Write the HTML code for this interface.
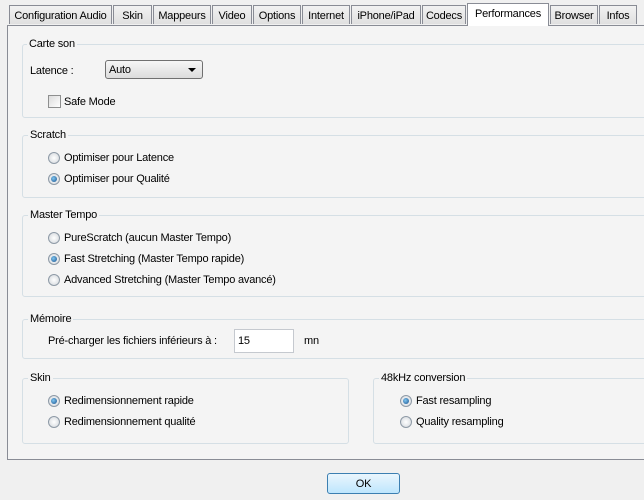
<!DOCTYPE html><html><head><style>
body{margin:0;width:644px;height:500px;background:#f0f0f0;font-family:"Liberation Sans",sans-serif;font-size:11px;letter-spacing:-0.2px;color:#000;position:relative;overflow:hidden}
.a{position:absolute;white-space:nowrap}
.tab{position:absolute;top:5px;height:19px;border:1px solid #898c95;border-bottom:none;background:linear-gradient(#f2f2f2,#e0e0e0);text-align:center;line-height:20px;box-sizing:border-box}
.panel{position:absolute;left:7px;top:25px;width:650px;height:435px;border:1px solid #898c95;background:#f4f4f4;box-sizing:border-box}
.g{position:absolute;border:1px solid #d5dfe5;border-radius:3px;box-sizing:border-box}
.gl{position:absolute;background:#f4f4f4;padding:0 2px;line-height:13px}
.r{position:absolute;width:12px;height:12px;border-radius:50%;border:1px solid #8e9aa6;background:radial-gradient(#fff,#d0d5da);box-sizing:border-box}
.r.on::after{content:"";position:absolute;left:2px;top:2px;width:6px;height:6px;border-radius:50%;background:radial-gradient(circle at 40% 40%,#7fc6f0,#174f8c)}
</style></head><body>
<div class="panel"></div>
<div class="tab" style="left:9px;width:103px">Configuration Audio</div>
<div class="tab" style="left:113px;width:39px">Skin</div>
<div class="tab" style="left:153px;width:58px">Mappeurs</div>
<div class="tab" style="left:212px;width:40px">Video</div>
<div class="tab" style="left:253px;width:48px">Options</div>
<div class="tab" style="left:302px;width:48px">Internet</div>
<div class="tab" style="left:351px;width:70px">iPhone/iPad</div>
<div class="tab" style="left:422px;width:44px">Codecs</div>
<div class="tab" style="left:467px;top:3px;height:23px;width:82px;background:#fff;line-height:20px">Performances</div>
<div class="tab" style="left:550px;width:48px">Browser</div>
<div class="tab" style="left:599px;width:38px">Infos</div>

<div class="g" style="left:22px;top:44px;width:640px;height:74px"></div>
<div class="gl" style="left:27px;top:38px">Carte son</div>
<div class="a" style="left:30px;top:65px">Latence :</div>
<div class="a" style="left:105px;top:60px;width:98px;height:19px;border:1px solid #707070;border-radius:3px;box-sizing:border-box;background:linear-gradient(#f6f6f6,#dcdcdc)"><span style="position:absolute;left:3px;top:3px">Auto</span><span style="position:absolute;right:6px;top:7px;border:4px solid transparent;border-top:4px solid #000;border-bottom:none;width:0"></span></div>
<div class="a" style="left:48px;top:95px;width:13px;height:13px;border:1px solid #8e8f8f;box-sizing:border-box;background:linear-gradient(135deg,#dcdcdc,#fff)"></div>
<div class="a" style="left:64px;top:96px">Safe Mode</div>

<div class="g" style="left:22px;top:135px;width:640px;height:63px"></div>
<div class="gl" style="left:28px;top:129px">Scratch</div>
<div class="r" style="left:48px;top:152px"></div><div class="a" style="left:64px;top:152px">Optimiser pour Latence</div>
<div class="r on" style="left:48px;top:173px"></div><div class="a" style="left:64px;top:173px">Optimiser pour Qualité</div>

<div class="g" style="left:22px;top:215px;width:640px;height:82px"></div>
<div class="gl" style="left:28px;top:209px">Master Tempo</div>
<div class="r" style="left:48px;top:232px"></div><div class="a" style="left:64px;top:232px">PureScratch (aucun Master Tempo)</div>
<div class="r on" style="left:48px;top:253px"></div><div class="a" style="left:64px;top:253px">Fast Stretching (Master Tempo rapide)</div>
<div class="r" style="left:48px;top:274px"></div><div class="a" style="left:64px;top:274px">Advanced Stretching (Master Tempo avancé)</div>

<div class="g" style="left:22px;top:319px;width:640px;height:40px"></div>
<div class="gl" style="left:28px;top:313px">Mémoire</div>
<div class="a" style="left:48px;top:335px">Pré-charger les fichiers inférieurs à :</div>
<div class="a" style="left:234px;top:329px;width:60px;height:24px;border:1px solid #c5c9cf;background:#fff;box-sizing:border-box"><span style="position:absolute;left:3px;top:5px">15</span></div>
<div class="a" style="left:304px;top:335px">mn</div>

<div class="g" style="left:22px;top:378px;width:327px;height:66px"></div>
<div class="gl" style="left:28px;top:372px">Skin</div>
<div class="r on" style="left:48px;top:395px"></div><div class="a" style="left:64px;top:395px">Redimensionnement rapide</div>
<div class="r" style="left:48px;top:416px"></div><div class="a" style="left:64px;top:416px">Redimensionnement qualité</div>

<div class="g" style="left:373px;top:378px;width:290px;height:66px"></div>
<div class="gl" style="left:379px;top:372px">48kHz conversion</div>
<div class="r on" style="left:400px;top:395px"></div><div class="a" style="left:416px;top:395px">Fast resampling</div>
<div class="r" style="left:400px;top:416px"></div><div class="a" style="left:416px;top:416px">Quality resampling</div>

<div class="a" style="left:327px;top:473px;width:73px;height:21px;border:1px solid #3c7fb1;border-radius:3px;box-sizing:border-box;background:linear-gradient(#eaf6fd,#bee6fd);text-align:center;line-height:20px">OK</div>
</body></html>
